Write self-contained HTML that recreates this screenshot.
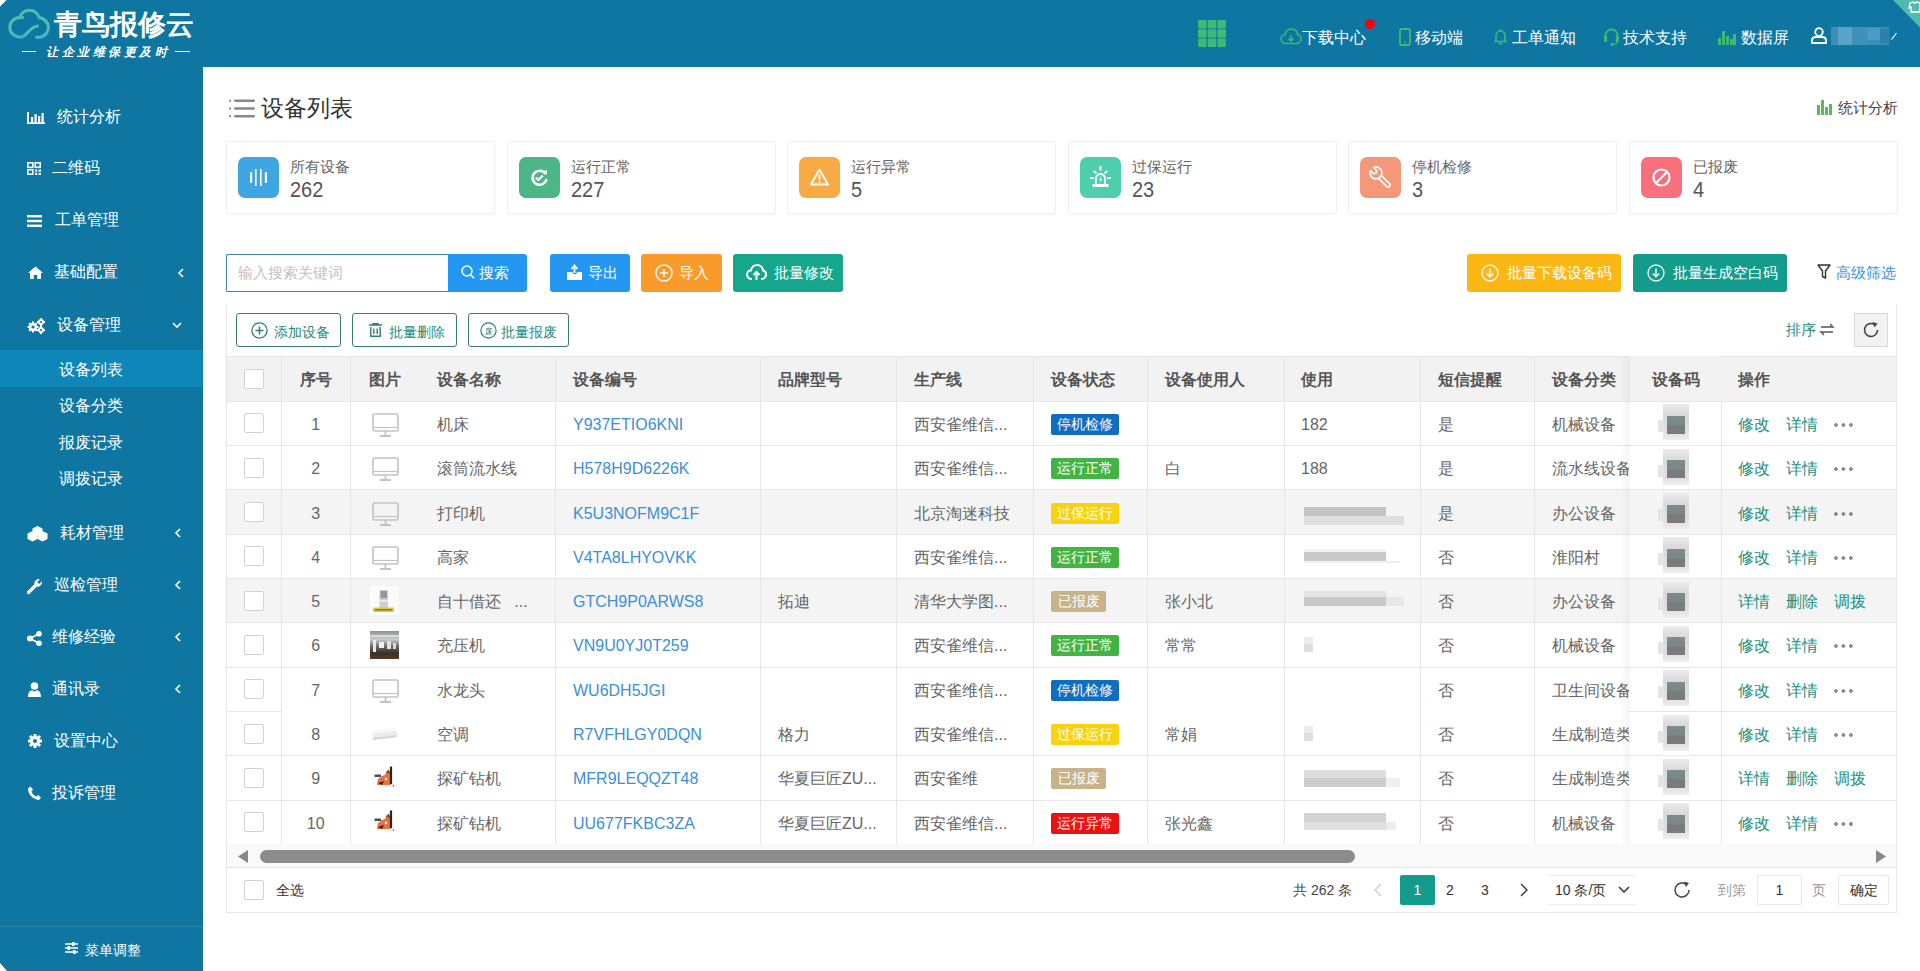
<!DOCTYPE html>
<html><head><meta charset="utf-8">
<style>
*{box-sizing:border-box;margin:0;padding:0}
html,body{width:1920px;height:971px;overflow:hidden;background:#fff;font-family:"Liberation Sans",sans-serif;color:#555}
.a{position:absolute;white-space:nowrap}
svg{position:absolute;overflow:visible}
#hdr{position:absolute;left:0;top:0;width:1920px;height:67px;background:#0e76a0}
#side{position:absolute;left:0;top:67px;width:203px;height:904px;background:#0e76a0}
.mt{position:absolute;color:#fff;font-size:16px;line-height:20px;white-space:nowrap}
.ht{position:absolute;top:28px;color:#fff;font-size:16px;line-height:20px;white-space:nowrap}
.card{position:absolute;top:141px;width:269px;height:73px;border:1px solid #f0f0f0;border-radius:3px;background:#fff;box-shadow:0 1px 2px rgba(0,0,0,.03)}
.card .sq{position:absolute;left:11px;top:15px;width:41px;height:41px;border-radius:7px}
.card .lb{position:absolute;left:63px;top:16px;font-size:15px;line-height:18px;color:#666;white-space:nowrap}
.card .nm{position:absolute;left:63px;top:36px;font-size:20px;line-height:24px;color:#555;transform:scaleY(1.1);transform-origin:0 20px}
.th{font-size:16px;line-height:20px;font-weight:bold;color:#555}
.td{font-size:16px;line-height:20px;color:#666}
.lnk{color:#3b8fd9}
.op{color:#1e9080}
.tag{height:21px;border-radius:2px;color:#fff;font-size:14px;line-height:21px;text-align:center}
.bt{font-size:15px;line-height:20px;color:#fff}
.ob{top:313px;height:34px;border:1px solid #3d7d74;border-radius:3px;background:#fff}
.obt{top:321.5px;font-size:14px;line-height:20px;color:#2b8a7c}
</style></head><body>
<div id="hdr">
  <!-- logo -->
  <svg style="left:8px;top:8px" width="42" height="32" viewBox="0 0 42 32"><defs><linearGradient id="cg" x1="0" y1="0" x2="0" y2="1"><stop offset="0" stop-color="#4fc0a8"/><stop offset="1" stop-color="#4ab5c8"/></linearGradient></defs><g fill="none" stroke="url(#cg)" stroke-width="2.7" transform="scale(1.16,1.12) translate(-2,-3)"><path d="M15.5 11.5 H12.5 A8.7 8.7 0 1 0 14.5 28.6"/><path d="M12 11.8 A8.6 8.6 0 0 1 28.8 11.8"/><path d="M28.5 11.8 A8.7 8.7 0 1 1 25.5 28.8"/><path d="M14.5 28.6 C19 27 21 19 28.5 19"/></g></svg>
  <div class="a" style="left:54px;top:7px;font-size:28px;line-height:36px;color:#fff;font-weight:bold;letter-spacing:0px">青鸟报修云</div><svg style="left:0;top:0" width="7" height="7" viewBox="0 0 7 7"><path d="M0 0 H6.5 L0 6.5 Z" fill="#fff"/></svg>
  <div class="a" style="left:22px;top:51px;width:14px;height:1px;background:#fff"></div>
  <div class="a" style="left:175px;top:51px;width:15px;height:1px;background:#fff"></div>
  <div class="a" style="left:46px;top:44px;font-size:12px;line-height:16px;color:#fff;letter-spacing:3.5px;font-family:'Liberation Serif',serif;font-style:italic;font-weight:bold">让企业维保更及时</div>
  <!-- grid -->
  <svg style="left:1198px;top:20px" width="28" height="27" viewBox="0 0 28 27"><g fill="#3fba74"><rect x="0" y="0" width="8.6" height="8.4" rx="1.5"/><rect x="9.7" y="0" width="8.6" height="8.4" rx="0.5"/><rect x="19.4" y="0" width="8.6" height="8.4" rx="1.5"/><rect x="0" y="9.3" width="8.6" height="8.4"/><rect x="9.7" y="9.3" width="8.6" height="8.4"/><rect x="19.4" y="9.3" width="8.6" height="8.4"/><rect x="0" y="18.6" width="8.6" height="8.4" rx="1.5"/><rect x="9.7" y="18.6" width="8.6" height="8.4"/><rect x="19.4" y="18.6" width="8.6" height="8.4" rx="1.5"/></g></svg>
  <!-- download -->
  <svg style="left:1280px;top:28px" width="22" height="17" viewBox="0 0 22 17"><path d="M6 15.5 C3 15.5 1 13.5 1 11 C1 8.5 3 7 5 7 C5.5 3.5 8 1 11.5 1 C15 1 17.5 3.5 17.5 6.5 C19.5 6.5 21 8.5 21 11 C21 13.5 19 15.5 16 15.5 Z" fill="none" stroke="#3fba74" stroke-width="1.5"/><path d="M11 7 V13 M8.5 10.5 L11 13 L13.5 10.5" fill="none" stroke="#3fba74" stroke-width="1.6"/></svg>
  <div class="ht" style="left:1302px">下载中心</div>
  <div class="a" style="left:1365.3px;top:19.3px;width:9.5px;height:9.5px;border-radius:50%;background:#f00"></div>
  <svg style="left:1399px;top:28px" width="12" height="18" viewBox="0 0 12 18"><rect x="1" y="1" width="10" height="16" rx="1.5" fill="none" stroke="#3fba74" stroke-width="1.8"/><circle cx="6" cy="14.5" r="0.9" fill="#3fba74"/></svg>
  <div class="ht" style="left:1415px">移动端</div>
  <svg style="left:1493px;top:28px" width="15" height="17" viewBox="0 0 15 17"><path d="M7.5 1 V2.5 M3 13 V8 C3 5 5 3 7.5 3 C10 3 12 5 12 8 V13 M1 13.5 H14 M6 15.5 H9" fill="none" stroke="#3fba74" stroke-width="1.6"/></svg>
  <div class="ht" style="left:1512px">工单通知</div>
  <svg style="left:1603px;top:27px" width="17" height="19" viewBox="0 0 17 19"><path d="M2.5 12 V8.5 A6 6 0 0 1 14.5 8.5 V12" fill="none" stroke="#3fba74" stroke-width="1.8"/><rect x="1" y="9" width="3.2" height="6" rx="1" fill="#3fba74"/><rect x="12.8" y="9" width="3.2" height="6" rx="1" fill="#3fba74"/><path d="M14.5 14 Q14 17.5 9.5 17.5" fill="none" stroke="#3fba74" stroke-width="1.4"/><circle cx="9" cy="17.5" r="1.4" fill="#3fba74"/></svg>
  <div class="ht" style="left:1623px">技术支持</div>
  <svg style="left:1718px;top:29px" width="18" height="16" viewBox="0 0 18 16"><g fill="#3fba74"><rect x="0" y="9" width="3" height="7"/><rect x="4" y="2" width="3" height="14"/><rect x="8" y="7" width="3" height="9"/><rect x="12" y="10" width="3" height="6"/><rect x="15" y="5" width="3" height="11"/></g></svg>
  <div class="ht" style="left:1741px">数据屏</div>
  <svg style="left:1811px;top:27px" width="16" height="17" viewBox="0 0 16 17"><circle cx="8" cy="5" r="3.8" fill="none" stroke="#fff" stroke-width="1.8"/><path d="M1 16 V13.5 C1 11 3 10 5 10 H11 C13 10 15 11 15 13.5 V16 Z" fill="none" stroke="#fff" stroke-width="1.8"/></svg>
  <div class="a" style="left:1831px;top:27px;width:58px;height:18px;background:#3a8db4"></div><div class="a" style="left:1838px;top:27px;width:14px;height:18px;background:#5aa3c6"></div><div class="a" style="left:1852px;top:27px;width:15px;height:18px;background:#3f91b8"></div><div class="a" style="left:1867px;top:28px;width:13px;height:12px;background:#4b9bc0"></div><div class="a" style="left:1880px;top:29px;width:10px;height:14px;background:#2a82ac"></div>
  <svg style="left:1891px;top:32px" width="6" height="8" viewBox="0 0 6 8"><path d="M0.5 7.5 L5.5 1" stroke="#fff" stroke-width="1.2"/></svg>
  <svg style="left:1880px;top:0" width="40" height="30" viewBox="0 0 40 30"><path d="M13 0 H40 V27.5 Z" fill="#55b9b3"/><path d="M30 3 L33 2 Q35 4 37 2 L40 3 V12 H31 V7 L29 8 Z" fill="none" stroke="#fff" stroke-width="1.3"/></svg>
</div>
<div id="side">
  <!-- y offsets relative to sidebar top (67) -->
  <svg style="left:27px;top:45px" width="18" height="12" viewBox="0 0 18 12"><g fill="#fff"><rect x="0" y="0" width="2" height="12"/><rect x="0" y="10.3" width="18" height="1.7"/><rect x="4" y="5" width="2.2" height="6"/><rect x="7.5" y="2" width="2.2" height="9"/><rect x="11" y="4" width="2.2" height="7"/><rect x="14.5" y="1" width="2.2" height="10"/></g></svg>
  <div class="mt" style="left:57px;top:40px">统计分析</div>
  <svg style="left:27px;top:95px" width="14" height="13" viewBox="0 0 14 13"><g fill="none" stroke="#fff" stroke-width="1.6"><rect x="0.8" y="0.8" width="5" height="4.5"/><rect x="8.2" y="0.8" width="5" height="4.5"/><rect x="0.8" y="7.7" width="5" height="4.5"/></g><g fill="#fff"><rect x="8" y="7.5" width="2.2" height="2.2"/><rect x="11.5" y="7.5" width="2.5" height="2.2"/><rect x="8" y="10.8" width="2.2" height="2.2"/><rect x="11.5" y="10.8" width="2.5" height="2.2"/></g></svg>
  <div class="mt" style="left:52px;top:91px">二维码</div>
  <svg style="left:27px;top:148px" width="15" height="12" viewBox="0 0 15 12"><g fill="#fff"><rect x="0" y="0" width="15" height="2.4"/><rect x="0" y="4.8" width="15" height="2.4"/><rect x="0" y="9.6" width="15" height="2.4"/></g></svg>
  <div class="mt" style="left:55px;top:143px">工单管理</div>
  <svg style="left:28px;top:199px" width="15" height="13" viewBox="0 0 15 13"><path d="M7.5 0.5 L15 7 L13 7 L13 13 L9.3 13 L9.3 9 L5.7 9 L5.7 13 L2 13 L2 7 L0 7 Z" fill="#fff"/></svg>
  <div class="mt" style="left:54px;top:195px">基础配置</div>
  <svg style="left:178px;top:201px" width="6" height="10" viewBox="0 0 6 10"><path d="M5 1 L1 5 L5 9" fill="none" stroke="#fff" stroke-width="1.6"/></svg>
  <svg style="left:27px;top:251px" width="18" height="15" viewBox="0 0 18 15"><g fill="#fff"><circle cx="6" cy="9" r="4.2"/><circle cx="14" cy="4" r="3"/><circle cx="14" cy="12" r="3"/></g><g fill="#0e76a0"><circle cx="6" cy="9" r="1.6"/><circle cx="14" cy="4" r="1.1"/><circle cx="14" cy="12" r="1.1"/></g><g stroke="#fff" stroke-width="2"><path d="M6 3.5 V14.5 M0.5 9 H11.5 M2.1 5.1 L9.9 12.9 M2.1 12.9 L9.9 5.1"/><path d="M14 0 V8 M10 4 H18 M14 8 V16 M10 12 H18"/></g><g fill="#0e76a0"><circle cx="6" cy="9" r="1.6"/><circle cx="14" cy="4" r="1.1"/><circle cx="14" cy="12" r="1.1"/></g></svg>
  <div class="mt" style="left:57px;top:248px">设备管理</div>
  <svg style="left:172px;top:255px" width="10" height="6" viewBox="0 0 10 6"><path d="M1 1 L5 5 L9 1" fill="none" stroke="#fff" stroke-width="1.6"/></svg>
  <div class="a" style="left:0;top:283px;width:203px;height:37px;background:#0e86b7"></div>
  <div class="mt" style="left:59px;top:293px">设备列表</div>
  <div class="mt" style="left:59px;top:329px">设备分类</div>
  <div class="mt" style="left:59px;top:365.5px">报废记录</div>
  <div class="mt" style="left:59px;top:401.5px">调拨记录</div>
  <svg style="left:27px;top:459px" width="21" height="15" viewBox="0 0 21 15"><g fill="#fff"><path d="M10.5 0 L15.5 2.5 V8 L10.5 10.5 L5.5 8 V2.5 Z"/><path d="M5.5 5 L10.5 7.5 V13 L5.5 15.5 L0.5 13 V7.5 Z"/><path d="M15.5 5 L20.5 7.5 V13 L15.5 15.5 L10.5 13 V7.5 Z"/></g></svg>
  <div class="mt" style="left:60px;top:456px">耗材管理</div>
  <svg style="left:175px;top:461px" width="6" height="10" viewBox="0 0 6 10"><path d="M5 1 L1 5 L5 9" fill="none" stroke="#fff" stroke-width="1.6"/></svg>
  <svg style="left:27px;top:511px" width="16" height="16" viewBox="0 0 16 16"><path d="M1.5 14.5 L8.5 7.5" stroke="#fff" stroke-width="3.2" stroke-linecap="round"/><path d="M8 8 C6.5 5 8 1.5 11.5 1 L13 1.2 L10.5 3.8 L11.2 5.2 L12.6 5.8 L15 3.2 C15.3 7 12 9.5 8.8 8.6 Z" fill="#fff"/></svg>
  <div class="mt" style="left:54px;top:508px">巡检管理</div>
  <svg style="left:175px;top:513px" width="6" height="10" viewBox="0 0 6 10"><path d="M5 1 L1 5 L5 9" fill="none" stroke="#fff" stroke-width="1.6"/></svg>
  <svg style="left:27px;top:564px" width="15" height="15" viewBox="0 0 15 15"><g fill="#fff"><circle cx="3" cy="7.5" r="3"/><circle cx="12" cy="2.8" r="2.8"/><circle cx="12" cy="12.2" r="2.8"/></g><path d="M3 7.5 L12 2.8 M3 7.5 L12 12.2" stroke="#fff" stroke-width="1.8"/></svg>
  <div class="mt" style="left:52px;top:560px">维修经验</div>
  <svg style="left:175px;top:565px" width="6" height="10" viewBox="0 0 6 10"><path d="M5 1 L1 5 L5 9" fill="none" stroke="#fff" stroke-width="1.6"/></svg>
  <svg style="left:28px;top:615px" width="13" height="15" viewBox="0 0 13 15"><g fill="#fff"><circle cx="6.5" cy="4" r="3.8"/><path d="M0 15 C0 10.5 2 8.5 4 8.3 L6.5 9.5 L9 8.3 C11 8.5 13 10.5 13 15 Z"/></g></svg>
  <div class="mt" style="left:52px;top:612px">通讯录</div>
  <svg style="left:175px;top:617px" width="6" height="10" viewBox="0 0 6 10"><path d="M5 1 L1 5 L5 9" fill="none" stroke="#fff" stroke-width="1.6"/></svg>
  <svg style="left:28px;top:667px" width="14" height="14" viewBox="0 0 14 14"><g fill="#fff"><circle cx="7" cy="7" r="5"/><path d="M7 0 V14 M0 7 H14 M2 2 L12 12 M2 12 L12 2" stroke="#fff" stroke-width="3"/></g><circle cx="7" cy="7" r="2" fill="#0e76a0"/></svg>
  <div class="mt" style="left:54px;top:664px">设置中心</div>
  <svg style="left:28px;top:719px" width="13" height="14" viewBox="0 0 13 14"><path d="M2.5 0.5 L5 3.5 L3.5 5.5 C4.5 8 6 9.5 8.5 10.5 L10 9 L13 11.5 L11 14 C5 13.5 0 8.5 0 2.5 Z" fill="#fff"/></svg>
  <div class="mt" style="left:52px;top:716px">投诉管理</div>
  <div class="a" style="left:0;top:859px;width:203px;height:1px;background:#2a86ad"></div>
  <svg style="left:65px;top:875px" width="13" height="12" viewBox="0 0 13 12"><g stroke="#fff" stroke-width="1.6"><path d="M0 2 H13 M0 6 H13 M0 10 H13"/></g><g fill="#fff"><rect x="7" y="0" width="2.5" height="4"/><rect x="2.5" y="4" width="2.5" height="4"/><rect x="8" y="8" width="2.5" height="4"/></g></svg>
  <div class="mt" style="left:85px;top:873px;font-size:14px">菜单调整</div>
  <svg style="left:0;top:896px" width="7" height="8" viewBox="0 0 7 8"><path d="M0 0 L7 8 H0 Z" fill="#fff"/></svg>
</div>

<!-- title -->
<svg style="left:229px;top:99px" width="26" height="19" viewBox="0 0 26 19"><g fill="#888"><rect x="0" y="0.8" width="2" height="2"/><rect x="0" y="8.5" width="2" height="2"/><rect x="0" y="16.2" width="2" height="2"/><rect x="5" y="0.5" width="21" height="2.4" rx="1.2"/><rect x="5" y="8.3" width="21" height="2.4" rx="1.2"/><rect x="5" y="16" width="21" height="2.4" rx="1.2"/></g></svg>
<div class="a" style="left:261px;top:95.5px;font-size:22.5px;line-height:26px;color:#333">设备列表</div>
<svg style="left:1817px;top:100px" width="16" height="15" viewBox="0 0 16 15"><g fill="#5cb85c"><rect x="0" y="5" width="3" height="10"/><rect x="4" y="0" width="3" height="15"/><rect x="8" y="7" width="3" height="8"/><rect x="12" y="4" width="3" height="11"/></g></svg>
<div class="a" style="left:1838px;top:98px;font-size:15px;line-height:20px;color:#444">统计分析</div>
<!-- cards -->
<div class="card" style="left:226px"><div class="sq" style="background:#3ea6e3"><svg style="left:12px;top:12px" width="17" height="17" viewBox="0 0 17 17"><g fill="#fff"><rect x="0" y="3" width="2.2" height="11" rx="1"/><rect x="5" y="0" width="1.6" height="17"/><rect x="10" y="0" width="1.6" height="17"/><rect x="14.8" y="3" width="2.2" height="11" rx="1"/></g></svg></div><div class="lb">所有设备</div><div class="nm">262</div></div>
<div class="card" style="left:507px"><div class="sq" style="background:#4db686"><svg style="left:11px;top:11px" width="19" height="19" viewBox="0 0 19 19"><path d="M15.5 6 A7 7 0 1 0 16.5 11" fill="none" stroke="#fff" stroke-width="2.4"/><path d="M12.5 3.5 L17 2 L16.5 7 Z" fill="#fff"/><path d="M5.8 9.5 L8.3 12 L12.8 7.6" fill="none" stroke="#fff" stroke-width="2.2"/></svg></div><div class="lb">运行正常</div><div class="nm">227</div></div>
<div class="card" style="left:787px"><div class="sq" style="background:#f8aa45"><svg style="left:11px;top:11px" width="19" height="18" viewBox="0 0 19 18"><path d="M9.5 1.5 L18 16.5 H1 Z" fill="none" stroke="#fff" stroke-width="1.8" stroke-linejoin="round"/><rect x="8.6" y="6.5" width="1.8" height="5.5" fill="#fff"/><rect x="8.6" y="13" width="1.8" height="1.8" fill="#fff"/></svg></div><div class="lb">运行异常</div><div class="nm">5</div></div>
<div class="card" style="left:1068px"><div class="sq" style="background:#4dcfae"><svg style="left:0;top:0" width="41" height="41" viewBox="0 0 41 41"><g stroke="#fff" stroke-width="1.8" fill="none"><path d="M20.5 9 V13.5 M13.8 13.8 L16.5 16.5 M27.2 13.8 L24.5 16.5 M10 21 H13.8 M27.2 21 H31"/><path d="M16 27.5 V21.5 A4.5 4.5 0 0 1 25 21.5 V27.5"/></g><rect x="12.5" y="27" width="16" height="3" fill="#fff"/><path d="M21.5 18.5 L18.8 23 H20.8 L19.5 26.5 L22.5 22 H20.5 Z" fill="#fff"/></svg></div><div class="lb">过保运行</div><div class="nm">23</div></div>
<div class="card" style="left:1348px"><div class="sq" style="background:#f5987a"><svg style="left:0;top:0" width="41" height="41" viewBox="0 0 41 41"><g transform="rotate(-45 20.5 20.5)" fill="none" stroke="#fff" stroke-width="1.7" stroke-linejoin="round"><path d="M18.3 8.5 A6 6 0 1 0 22.7 8.5 V13 L20.5 14.3 L18.3 13 Z"/><path d="M18.5 18.6 V31.5 Q18.5 33 20.5 33 Q22.5 33 22.5 31.5 V18.6"/></g></svg></div><div class="lb">停机检修</div><div class="nm">3</div></div>
<div class="card" style="left:1629px"><div class="sq" style="background:#f7707c"><svg style="left:11px;top:11px" width="19" height="19" viewBox="0 0 19 19"><circle cx="9.5" cy="9.5" r="8" fill="none" stroke="#fff" stroke-width="2.2"/><path d="M4 15 L15 4" stroke="#fff" stroke-width="2.2"/></svg></div><div class="lb">已报废</div><div class="nm">4</div></div>
<!-- toolbar row 1 -->
<div class="a" style="left:226px;top:254px;width:223px;height:38px;border:1px solid #3f83a6;border-right:none;border-radius:2px 0 0 2px;background:#fff"></div>
<div class="a" style="left:238px;top:263px;font-size:15px;line-height:20px;color:#c2c2c2">输入搜索关键词</div>
<div class="a btn" style="left:448px;top:254px;width:79px;height:38px;background:#2397f2;border-radius:0 3px 3px 0"></div>
<svg style="left:461px;top:265px" width="14" height="15" viewBox="0 0 14 15"><circle cx="6" cy="6" r="5" fill="none" stroke="#fff" stroke-width="1.5"/><path d="M9.8 9.8 L13 13.5" stroke="#fff" stroke-width="1.6"/></svg>
<div class="a bt" style="left:479px;top:263px">搜索</div>
<div class="a" style="left:550px;top:254px;width:80px;height:38px;background:#2397f2;border-radius:3px"></div>
<svg style="left:566px;top:264px" width="17" height="17" viewBox="0 0 17 17"><path d="M1 8 H6 L7.5 10 H10 L11.5 8 H16 V16 H1 Z" fill="#fff"/><path d="M8.5 9 V2 M5.5 5 L8.5 1.5 L11.5 5" fill="none" stroke="#fff" stroke-width="1.8"/></svg>
<div class="a bt" style="left:588px;top:263px">导出</div>
<div class="a" style="left:641px;top:254px;width:81px;height:38px;background:#f89b2a;border-radius:3px"></div>
<svg style="left:655px;top:264px" width="18" height="18" viewBox="0 0 18 18"><circle cx="9" cy="9" r="8" fill="none" stroke="#fff" stroke-width="1.4"/><path d="M9 5 V13 M5 9 H13" stroke="#fff" stroke-width="1.5"/></svg>
<div class="a bt" style="left:679px;top:263px">导入</div>
<div class="a" style="left:733px;top:254px;width:110px;height:38px;background:#16a68b;border-radius:3px"></div>
<svg style="left:746px;top:264px" width="21" height="17" viewBox="0 0 21 17"><path d="M6 15 C3 15 1 13 1 10.5 C1 8 3 6.5 5 6.5 C5.5 3.3 8 1 11 1 C14.5 1 17 3.5 17 6.5 C19 6.8 20 8.5 20 10.5 C20 13 18 15 15 15" fill="none" stroke="#fff" stroke-width="2"/><path d="M10.5 16 V8 M7.5 11 L10.5 8 L13.5 11" fill="none" stroke="#fff" stroke-width="2"/></svg>
<div class="a bt" style="left:774px;top:263px">批量修改</div>

<div class="a" style="left:1467px;top:254px;width:154px;height:38px;background:#fbb814;border-radius:3px"></div>
<svg style="left:1481px;top:264px" width="18" height="18" viewBox="0 0 18 18"><circle cx="9" cy="9" r="8" fill="none" stroke="#fff" stroke-width="1.3"/><path d="M9 4.5 V12.5 M5.8 9.5 L9 12.7 L12.2 9.5" fill="none" stroke="#fff" stroke-width="1.4"/></svg>
<div class="a bt" style="left:1507px;top:263px">批量下载设备码</div>
<div class="a" style="left:1633px;top:254px;width:154px;height:38px;background:#139b8b;border-radius:3px"></div>
<svg style="left:1647px;top:264px" width="18" height="18" viewBox="0 0 18 18"><circle cx="9" cy="9" r="8" fill="none" stroke="#fff" stroke-width="1.3"/><path d="M9 4.5 V12.5 M5.8 9.5 L9 12.7 L12.2 9.5" fill="none" stroke="#fff" stroke-width="1.4"/></svg>
<div class="a bt" style="left:1673px;top:263px">批量生成空白码</div>
<svg style="left:1817px;top:264px" width="14" height="15" viewBox="0 0 14 15"><path d="M1 1 H13 L8.5 7 V14 L5.5 12.5 V7 Z" fill="none" stroke="#333" stroke-width="1.4" stroke-linejoin="round"/></svg>
<div class="a" style="left:1836px;top:263px;font-size:15px;line-height:20px;color:#3c8fe0">高级筛选</div>

<!-- toolbar row 2 -->
<div class="a ob" style="left:236px;width:105px"></div>
<svg style="left:251px;top:322px" width="17" height="17" viewBox="0 0 17 17"><circle cx="8.5" cy="8.5" r="7.6" fill="none" stroke="#2d7f72" stroke-width="1.3"/><path d="M8.5 4.5 V12.5 M4.5 8.5 H12.5" stroke="#2d7f72" stroke-width="1.5"/></svg>
<div class="a obt" style="left:274px">添加设备</div>
<div class="a ob" style="left:352px;width:105px"></div>
<svg style="left:369px;top:323px" width="13" height="14" viewBox="0 0 13 14"><path d="M0 2 H13 M4 2 V0.8 H9 V2" fill="none" stroke="#2d7f72" stroke-width="1.4"/><path d="M1.8 4 V13.2 H11.2 V4 M4.8 5.5 V11 M8.2 5.5 V11" fill="none" stroke="#2d7f72" stroke-width="1.4"/></svg>
<div class="a obt" style="left:389px">批量删除</div>
<div class="a ob" style="left:468px;width:101px"></div>
<svg style="left:480px;top:322px" width="17" height="17" viewBox="0 0 17 17"><circle cx="8.5" cy="8.5" r="7.6" fill="none" stroke="#2d7f72" stroke-width="1.2"/><text x="8.5" y="12" font-size="8" text-anchor="middle" fill="#2d7f72">废</text></svg>
<div class="a obt" style="left:501px">批量报废</div>
<div class="a" style="left:1786px;top:320px;font-size:15px;line-height:20px;color:#2b8a7c">排序</div>
<svg style="left:1820px;top:323px" width="14" height="13" viewBox="0 0 14 13"><path d="M1 4 H13 L10 1 M13 9 H1 L4 12" fill="none" stroke="#555" stroke-width="1.4"/></svg>
<div class="a" style="left:1854px;top:313px;width:34px;height:34px;border:1px solid #d8d8d8;background:#f2f2f2"></div>
<svg style="left:1862px;top:321px" width="18" height="18" viewBox="0 0 18 18"><path d="M15.5 9 A6.5 6.5 0 1 1 12.5 3.5" fill="none" stroke="#444" stroke-width="1.6"/><path d="M10.5 1 L15.5 2.5 L12.5 6.5 Z" fill="#444"/></svg>

<div class="a" style="left:226px;top:304px;width:1671px;height:609px;border:1px solid #e6e6e6;border-top:none"></div>
<div class="a" style="left:227px;top:356.3px;width:1669px;height:45.0px;background:#f2f2f2"></div>
<div class="a" style="left:227px;top:489.9px;width:1669px;height:44.3px;background:#f4f4f4"></div>
<div class="a" style="left:227px;top:578.5px;width:1669px;height:44.3px;background:#f4f4f4"></div>
<div class="a" style="left:227px;top:356.3px;width:1669px;height:1px;background:#e6e6e6"></div>
<div class="a" style="left:227px;top:400.8px;width:1669px;height:1px;background:#e6e6e6"></div>
<div class="a" style="left:227px;top:445.1px;width:1669px;height:1px;background:#e6e6e6"></div>
<div class="a" style="left:227px;top:489.4px;width:1669px;height:1px;background:#e6e6e6"></div>
<div class="a" style="left:227px;top:533.7px;width:1669px;height:1px;background:#e6e6e6"></div>
<div class="a" style="left:227px;top:578.0px;width:1669px;height:1px;background:#e6e6e6"></div>
<div class="a" style="left:227px;top:622.3px;width:1669px;height:1px;background:#e6e6e6"></div>
<div class="a" style="left:227px;top:666.6px;width:1669px;height:1px;background:#e6e6e6"></div>
<div class="a" style="left:227px;top:710.9px;width:54px;height:1px;background:#e6e6e6"></div>
<div class="a" style="left:1629px;top:710.9px;width:267px;height:1px;background:#e6e6e6"></div>
<div class="a" style="left:227px;top:755.2px;width:1669px;height:1px;background:#e6e6e6"></div>
<div class="a" style="left:227px;top:799.5px;width:1669px;height:1px;background:#e6e6e6"></div>
<div class="a" style="left:227px;top:843.8px;width:1669px;height:1px;background:#e6e6e6"></div>
<div class="a" style="left:280.5px;top:356.3px;width:1px;height:488.0px;background:#e6e6e6"></div>
<div class="a" style="left:350.0px;top:356.3px;width:1px;height:488.0px;background:#e6e6e6"></div>
<div class="a" style="left:555.0px;top:356.3px;width:1px;height:488.0px;background:#e6e6e6"></div>
<div class="a" style="left:760.0px;top:356.3px;width:1px;height:488.0px;background:#e6e6e6"></div>
<div class="a" style="left:896.0px;top:356.3px;width:1px;height:488.0px;background:#e6e6e6"></div>
<div class="a" style="left:1033.0px;top:356.3px;width:1px;height:488.0px;background:#e6e6e6"></div>
<div class="a" style="left:1147.0px;top:356.3px;width:1px;height:488.0px;background:#e6e6e6"></div>
<div class="a" style="left:1284.0px;top:356.3px;width:1px;height:488.0px;background:#e6e6e6"></div>
<div class="a" style="left:1420.0px;top:356.3px;width:1px;height:488.0px;background:#e6e6e6"></div>
<div class="a" style="left:1534.0px;top:356.3px;width:1px;height:488.0px;background:#e6e6e6"></div>
<div class="a" style="left:1720.8px;top:356.3px;width:1px;height:488.0px;background:#e6e6e6"></div>
<div class="a" style="left:1619.5px;top:356.3px;width:10px;height:488.0px;background:linear-gradient(90deg,rgba(0,0,0,0),rgba(0,0,0,.035))"></div>
<div class="a" style="left:1629.5px;top:356.3px;width:92px;height:45.0px;background:#f2f2f2"></div>
<div class="a" style="left:244px;top:368.8px;width:20px;height:20px;border:1px solid #d2d2d2;border-radius:2px;background:#fff"></div>
<div class="a th" style="left:281px;width:69.5px;text-align:center;top:369.8px;">序号</div>
<div class="a th" style="left:369px;top:369.8px;">图片</div>
<div class="a th" style="left:437px;top:369.8px;">设备名称</div>
<div class="a th" style="left:573px;top:369.8px;">设备编号</div>
<div class="a th" style="left:778px;top:369.8px;">品牌型号</div>
<div class="a th" style="left:914px;top:369.8px;">生产线</div>
<div class="a th" style="left:1051px;top:369.8px;">设备状态</div>
<div class="a th" style="left:1165px;top:369.8px;">设备使用人</div>
<div class="a th" style="left:1301px;top:369.8px;">使用</div>
<div class="a th" style="left:1438px;top:369.8px;">短信提醒</div>
<div class="a th" style="left:1552px;top:369.8px;">设备分类</div>
<div class="a th" style="left:1652px;top:369.8px;">设备码</div>
<div class="a th" style="left:1738px;top:369.8px;">操作</div>
<div class="a" style="left:244px;top:413.4px;width:20px;height:20px;border:1px solid #d2d2d2;border-radius:2px;background:#fff"></div>
<div class="a td" style="left:281px;width:69.5px;text-align:center;top:414.9px;">1</div>
<svg style="left:371.5px;top:412.9px" width="27" height="25" viewBox="0 0 27 25"><rect x="1" y="1" width="25" height="17" rx="1.5" fill="none" stroke="#c3c3c3" stroke-width="1.6"/><path d="M1.5 14.5 H25.5" stroke="#c3c3c3" stroke-width="1.2"/><path d="M13.5 18 V22 M8 23 H19" stroke="#c3c3c3" stroke-width="1.8"/></svg>
<div class="a td" style="left:437px;top:414.9px;">机床</div>
<div class="a td lnk" style="left:573px;top:414.9px;">Y937ETIO6KNI</div>
<div class="a td" style="left:914px;top:414.9px;">西安雀维信...</div>
<div class="a tag" style="left:1051px;top:413.9px;width:68px;background:#0f6ebf">停机检修</div>
<div class="a td" style="left:1301px;top:414.9px;">182</div>
<div class="a td" style="left:1438px;top:414.9px;">是</div>
<div class="a td" style="left:1552px;top:414.9px;width:77px;overflow:hidden">机械设备</div>
<div class="a" style="left:1663px;top:404.4px;width:26px;height:36px;background:linear-gradient(180deg,#ececec,#d9d9d9 30%,#e0e0e0 80%,#efefef)"></div>
<div class="a" style="left:1658px;top:420.4px;width:6px;height:12px;background:#e4e4e4"></div>
<div class="a" style="left:1667px;top:415.9px;width:18px;height:18px;background:linear-gradient(180deg,#7e8c8a,#788887 50%,#7a7a7a 55%,#7c7c7c)"></div>
<div class="a td op" style="left:1738px;top:414.9px;">修改</div>
<div class="a td op" style="left:1786px;top:414.9px;">详情</div>
<div class="a" style="left:1834px;top:422.9px;width:20px;height:4px;background:radial-gradient(circle at 2px 2px,#8a8a8a 1.6px,transparent 2px) 0 0/7.5px 4px repeat-x"></div>
<div class="a" style="left:244px;top:457.8px;width:20px;height:20px;border:1px solid #d2d2d2;border-radius:2px;background:#fff"></div>
<div class="a td" style="left:281px;width:69.5px;text-align:center;top:459.2px;">2</div>
<svg style="left:371.5px;top:457.2px" width="27" height="25" viewBox="0 0 27 25"><rect x="1" y="1" width="25" height="17" rx="1.5" fill="none" stroke="#c3c3c3" stroke-width="1.6"/><path d="M1.5 14.5 H25.5" stroke="#c3c3c3" stroke-width="1.2"/><path d="M13.5 18 V22 M8 23 H19" stroke="#c3c3c3" stroke-width="1.8"/></svg>
<div class="a td" style="left:437px;top:459.2px;">滚筒流水线</div>
<div class="a td lnk" style="left:573px;top:459.2px;">H578H9D6226K</div>
<div class="a td" style="left:914px;top:459.2px;">西安雀维信...</div>
<div class="a tag" style="left:1051px;top:458.2px;width:68px;background:#43b443">运行正常</div>
<div class="a td" style="left:1165px;top:459.2px;">白</div>
<div class="a td" style="left:1301px;top:459.2px;">188</div>
<div class="a td" style="left:1438px;top:459.2px;">是</div>
<div class="a td" style="left:1552px;top:459.2px;width:77px;overflow:hidden">流水线设备</div>
<div class="a" style="left:1663px;top:448.8px;width:26px;height:36px;background:linear-gradient(180deg,#ececec,#d9d9d9 30%,#e0e0e0 80%,#efefef)"></div>
<div class="a" style="left:1658px;top:464.8px;width:6px;height:12px;background:#e4e4e4"></div>
<div class="a" style="left:1667px;top:460.2px;width:18px;height:18px;background:linear-gradient(180deg,#7e8c8a,#788887 50%,#7a7a7a 55%,#7c7c7c)"></div>
<div class="a td op" style="left:1738px;top:459.2px;">修改</div>
<div class="a td op" style="left:1786px;top:459.2px;">详情</div>
<div class="a" style="left:1834px;top:467.2px;width:20px;height:4px;background:radial-gradient(circle at 2px 2px,#8a8a8a 1.6px,transparent 2px) 0 0/7.5px 4px repeat-x"></div>
<div class="a" style="left:244px;top:502.0px;width:20px;height:20px;border:1px solid #d2d2d2;border-radius:2px;background:#fff"></div>
<div class="a td" style="left:281px;width:69.5px;text-align:center;top:503.5px;">3</div>
<svg style="left:371.5px;top:501.5px" width="27" height="25" viewBox="0 0 27 25"><rect x="1" y="1" width="25" height="17" rx="1.5" fill="none" stroke="#c3c3c3" stroke-width="1.6"/><path d="M1.5 14.5 H25.5" stroke="#c3c3c3" stroke-width="1.2"/><path d="M13.5 18 V22 M8 23 H19" stroke="#c3c3c3" stroke-width="1.8"/></svg>
<div class="a td" style="left:437px;top:503.5px;">打印机</div>
<div class="a td lnk" style="left:573px;top:503.5px;">K5U3NOFM9C1F</div>
<div class="a td" style="left:914px;top:503.5px;">北京淘迷科技</div>
<div class="a tag" style="left:1051px;top:502.5px;width:68px;background:#f9d20f">过保运行</div>
<div class="a" style="left:1304px;top:506.7px;width:82px;height:9.3px;background:#c3c3c3"></div>
<div class="a" style="left:1304px;top:516.0px;width:100px;height:8.6px;background:#dedede"></div>
<div class="a td" style="left:1438px;top:503.5px;">是</div>
<div class="a td" style="left:1552px;top:503.5px;width:77px;overflow:hidden">办公设备</div>
<div class="a" style="left:1663px;top:493.0px;width:26px;height:36px;background:linear-gradient(180deg,#ececec,#d9d9d9 30%,#e0e0e0 80%,#efefef)"></div>
<div class="a" style="left:1658px;top:509.0px;width:6px;height:12px;background:#e4e4e4"></div>
<div class="a" style="left:1667px;top:504.5px;width:18px;height:18px;background:linear-gradient(180deg,#7e8c8a,#788887 50%,#7a7a7a 55%,#7c7c7c)"></div>
<div class="a td op" style="left:1738px;top:503.5px;">修改</div>
<div class="a td op" style="left:1786px;top:503.5px;">详情</div>
<div class="a" style="left:1834px;top:511.5px;width:20px;height:4px;background:radial-gradient(circle at 2px 2px,#8a8a8a 1.6px,transparent 2px) 0 0/7.5px 4px repeat-x"></div>
<div class="a" style="left:244px;top:546.4px;width:20px;height:20px;border:1px solid #d2d2d2;border-radius:2px;background:#fff"></div>
<div class="a td" style="left:281px;width:69.5px;text-align:center;top:547.9px;">4</div>
<svg style="left:371.5px;top:545.9px" width="27" height="25" viewBox="0 0 27 25"><rect x="1" y="1" width="25" height="17" rx="1.5" fill="none" stroke="#c3c3c3" stroke-width="1.6"/><path d="M1.5 14.5 H25.5" stroke="#c3c3c3" stroke-width="1.2"/><path d="M13.5 18 V22 M8 23 H19" stroke="#c3c3c3" stroke-width="1.8"/></svg>
<div class="a td" style="left:437px;top:547.9px;">高家</div>
<div class="a td lnk" style="left:573px;top:547.9px;">V4TA8LHYOVKK</div>
<div class="a td" style="left:914px;top:547.9px;">西安雀维信...</div>
<div class="a tag" style="left:1051px;top:546.9px;width:68px;background:#43b443">运行正常</div>
<div class="a" style="left:1304px;top:551.9px;width:82px;height:8.7px;background:#c9c9c9"></div>
<div class="a" style="left:1304px;top:549.4px;width:82px;height:2.5px;background:#f3f3f3"></div>
<div class="a" style="left:1304px;top:560.6px;width:96px;height:2.5px;background:#f0f0f0"></div>
<div class="a td" style="left:1438px;top:547.9px;">否</div>
<div class="a td" style="left:1552px;top:547.9px;width:77px;overflow:hidden">淮阳村</div>
<div class="a" style="left:1663px;top:537.4px;width:26px;height:36px;background:linear-gradient(180deg,#ececec,#d9d9d9 30%,#e0e0e0 80%,#efefef)"></div>
<div class="a" style="left:1658px;top:553.4px;width:6px;height:12px;background:#e4e4e4"></div>
<div class="a" style="left:1667px;top:548.9px;width:18px;height:18px;background:linear-gradient(180deg,#7e8c8a,#788887 50%,#7a7a7a 55%,#7c7c7c)"></div>
<div class="a td op" style="left:1738px;top:547.9px;">修改</div>
<div class="a td op" style="left:1786px;top:547.9px;">详情</div>
<div class="a" style="left:1834px;top:555.9px;width:20px;height:4px;background:radial-gradient(circle at 2px 2px,#8a8a8a 1.6px,transparent 2px) 0 0/7.5px 4px repeat-x"></div>
<div class="a" style="left:244px;top:590.6px;width:20px;height:20px;border:1px solid #d2d2d2;border-radius:2px;background:#fff"></div>
<div class="a td" style="left:281px;width:69.5px;text-align:center;top:592.1px;">5</div>
<svg style="left:370px;top:586.1px" width="29" height="29" viewBox="0 0 29 29"><rect width="29" height="29" fill="#fbfbfb"/><rect x="9.5" y="4" width="8.5" height="19" fill="#c9cfd3"/><rect x="10.5" y="5" width="6.5" height="7" fill="#8e9aa6"/><rect x="10" y="14" width="7.5" height="2" fill="#e8eaec"/><rect x="3" y="21.5" width="21" height="4.5" fill="#dcc84a"/><rect x="5" y="23" width="17" height="1.5" fill="#8a7a20"/></svg>
<div class="a td" style="left:437px;top:592.1px;">自十借还&nbsp;&nbsp;&nbsp;...</div>
<div class="a td lnk" style="left:573px;top:592.1px;">GTCH9P0ARWS8</div>
<div class="a td" style="left:778px;top:592.1px;">拓迪</div>
<div class="a td" style="left:914px;top:592.1px;">清华大学图...</div>
<div class="a tag" style="left:1051px;top:591.1px;width:55px;background:#c8b28a">已报废</div>
<div class="a td" style="left:1165px;top:592.1px;">张小北</div>
<div class="a" style="left:1304px;top:590.6px;width:82px;height:6.4px;background:#e3e3e3"></div>
<div class="a" style="left:1304px;top:597.0px;width:82px;height:8.6px;background:#c8c8c8"></div>
<div class="a" style="left:1386px;top:597.0px;width:18px;height:8.6px;background:#e8e8e8"></div>
<div class="a td" style="left:1438px;top:592.1px;">否</div>
<div class="a td" style="left:1552px;top:592.1px;width:77px;overflow:hidden">办公设备</div>
<div class="a" style="left:1663px;top:581.6px;width:26px;height:36px;background:linear-gradient(180deg,#ececec,#d9d9d9 30%,#e0e0e0 80%,#efefef)"></div>
<div class="a" style="left:1658px;top:597.6px;width:6px;height:12px;background:#e4e4e4"></div>
<div class="a" style="left:1667px;top:593.1px;width:18px;height:18px;background:linear-gradient(180deg,#7e8c8a,#788887 50%,#7a7a7a 55%,#7c7c7c)"></div>
<div class="a td op" style="left:1738px;top:592.1px;">详情</div>
<div class="a td op" style="left:1786px;top:592.1px;">删除</div>
<div class="a td op" style="left:1834px;top:592.1px;">调拨</div>
<div class="a" style="left:244px;top:634.9px;width:20px;height:20px;border:1px solid #d2d2d2;border-radius:2px;background:#fff"></div>
<div class="a td" style="left:281px;width:69.5px;text-align:center;top:636.4px;">6</div>
<svg style="left:370px;top:630.9px" width="29" height="28" viewBox="0 0 29 28"><defs><linearGradient id="g2" x1="0" y1="0" x2="0" y2="1"><stop offset="0" stop-color="#8d9296"/><stop offset=".3" stop-color="#c9cdd0"/><stop offset=".55" stop-color="#6d6862"/><stop offset=".8" stop-color="#3b2e28"/><stop offset="1" stop-color="#5a3a28"/></linearGradient></defs><rect width="29" height="28" fill="url(#g2)"/><rect x="3" y="9" width="3" height="12" fill="#e8e8e8"/><rect x="9" y="11" width="5" height="6" fill="#f2f2f2"/><rect x="17" y="10" width="4" height="8" fill="#e0e0e0"/><rect x="23" y="12" width="3" height="6" fill="#d8d8d8"/><rect x="0" y="4" width="29" height="2" fill="#d8dcde"/></svg>
<div class="a td" style="left:437px;top:636.4px;">充压机</div>
<div class="a td lnk" style="left:573px;top:636.4px;">VN9U0YJ0T259</div>
<div class="a td" style="left:914px;top:636.4px;">西安雀维信...</div>
<div class="a tag" style="left:1051px;top:635.4px;width:68px;background:#43b443">运行正常</div>
<div class="a td" style="left:1165px;top:636.4px;">常常</div>
<div class="a" style="left:1304px;top:636.9px;width:9px;height:15px;background:linear-gradient(180deg,#ececec 45%,#dedede 45%)"></div>
<div class="a td" style="left:1438px;top:636.4px;">否</div>
<div class="a td" style="left:1552px;top:636.4px;width:77px;overflow:hidden">机械设备</div>
<div class="a" style="left:1663px;top:625.9px;width:26px;height:36px;background:linear-gradient(180deg,#ececec,#d9d9d9 30%,#e0e0e0 80%,#efefef)"></div>
<div class="a" style="left:1658px;top:641.9px;width:6px;height:12px;background:#e4e4e4"></div>
<div class="a" style="left:1667px;top:637.4px;width:18px;height:18px;background:linear-gradient(180deg,#7e8c8a,#788887 50%,#7a7a7a 55%,#7c7c7c)"></div>
<div class="a td op" style="left:1738px;top:636.4px;">修改</div>
<div class="a td op" style="left:1786px;top:636.4px;">详情</div>
<div class="a" style="left:1834px;top:644.4px;width:20px;height:4px;background:radial-gradient(circle at 2px 2px,#8a8a8a 1.6px,transparent 2px) 0 0/7.5px 4px repeat-x"></div>
<div class="a" style="left:244px;top:679.2px;width:20px;height:20px;border:1px solid #d2d2d2;border-radius:2px;background:#fff"></div>
<div class="a td" style="left:281px;width:69.5px;text-align:center;top:680.7px;">7</div>
<svg style="left:371.5px;top:678.7px" width="27" height="25" viewBox="0 0 27 25"><rect x="1" y="1" width="25" height="17" rx="1.5" fill="none" stroke="#c3c3c3" stroke-width="1.6"/><path d="M1.5 14.5 H25.5" stroke="#c3c3c3" stroke-width="1.2"/><path d="M13.5 18 V22 M8 23 H19" stroke="#c3c3c3" stroke-width="1.8"/></svg>
<div class="a td" style="left:437px;top:680.7px;">水龙头</div>
<div class="a td lnk" style="left:573px;top:680.7px;">WU6DH5JGI</div>
<div class="a td" style="left:914px;top:680.7px;">西安雀维信...</div>
<div class="a tag" style="left:1051px;top:679.7px;width:68px;background:#0f6ebf">停机检修</div>
<div class="a td" style="left:1438px;top:680.7px;">否</div>
<div class="a td" style="left:1552px;top:680.7px;width:77px;overflow:hidden">卫生间设备</div>
<div class="a" style="left:1663px;top:670.2px;width:26px;height:36px;background:linear-gradient(180deg,#ececec,#d9d9d9 30%,#e0e0e0 80%,#efefef)"></div>
<div class="a" style="left:1658px;top:686.2px;width:6px;height:12px;background:#e4e4e4"></div>
<div class="a" style="left:1667px;top:681.7px;width:18px;height:18px;background:linear-gradient(180deg,#7e8c8a,#788887 50%,#7a7a7a 55%,#7c7c7c)"></div>
<div class="a td op" style="left:1738px;top:680.7px;">修改</div>
<div class="a td op" style="left:1786px;top:680.7px;">详情</div>
<div class="a" style="left:1834px;top:688.7px;width:20px;height:4px;background:radial-gradient(circle at 2px 2px,#8a8a8a 1.6px,transparent 2px) 0 0/7.5px 4px repeat-x"></div>
<div class="a" style="left:244px;top:723.5px;width:20px;height:20px;border:1px solid #d2d2d2;border-radius:2px;background:#fff"></div>
<div class="a td" style="left:281px;width:69.5px;text-align:center;top:725.0px;">8</div>
<svg style="left:371px;top:726.5px" width="27" height="14" viewBox="0 0 27 14"><path d="M1 4 L25 1 L26 10 L2 13 Z" fill="#ececec"/><path d="M1 4 L25 1 L25.3 4 L1.3 7 Z" fill="#f8f8f8"/><path d="M2 11 L26 8 L26 10 L2 13 Z" fill="#d6d6d6"/></svg>
<div class="a td" style="left:437px;top:725.0px;">空调</div>
<div class="a td lnk" style="left:573px;top:725.0px;">R7VFHLGY0DQN</div>
<div class="a td" style="left:778px;top:725.0px;">格力</div>
<div class="a td" style="left:914px;top:725.0px;">西安雀维信...</div>
<div class="a tag" style="left:1051px;top:724.0px;width:68px;background:#f9d20f">过保运行</div>
<div class="a td" style="left:1165px;top:725.0px;">常娟</div>
<div class="a" style="left:1304px;top:725.5px;width:9px;height:15px;background:linear-gradient(180deg,#ececec 45%,#dedede 45%)"></div>
<div class="a td" style="left:1438px;top:725.0px;">否</div>
<div class="a td" style="left:1552px;top:725.0px;width:77px;overflow:hidden">生成制造类</div>
<div class="a" style="left:1663px;top:714.5px;width:26px;height:36px;background:linear-gradient(180deg,#ececec,#d9d9d9 30%,#e0e0e0 80%,#efefef)"></div>
<div class="a" style="left:1658px;top:730.5px;width:6px;height:12px;background:#e4e4e4"></div>
<div class="a" style="left:1667px;top:726.0px;width:18px;height:18px;background:linear-gradient(180deg,#7e8c8a,#788887 50%,#7a7a7a 55%,#7c7c7c)"></div>
<div class="a td op" style="left:1738px;top:725.0px;">修改</div>
<div class="a td op" style="left:1786px;top:725.0px;">详情</div>
<div class="a" style="left:1834px;top:733.0px;width:20px;height:4px;background:radial-gradient(circle at 2px 2px,#8a8a8a 1.6px,transparent 2px) 0 0/7.5px 4px repeat-x"></div>
<div class="a" style="left:244px;top:767.9px;width:20px;height:20px;border:1px solid #d2d2d2;border-radius:2px;background:#fff"></div>
<div class="a td" style="left:281px;width:69.5px;text-align:center;top:769.4px;">9</div>
<svg style="left:374px;top:765.9px" width="21" height="21" viewBox="0 0 21 21"><path d="M3 19 L4 13 L8 10 L11 9 L12 6 L16 6 L17 19 Z" fill="#e8703a"/><path d="M17 0.5 V18" stroke="#2a2522" stroke-width="2.2"/><path d="M0.5 8.5 H7 V11 H0.5 Z" fill="#4a4f55"/><path d="M12 6 L15 3.5 L16 8 Z" fill="#7a3a20"/><path d="M4 17 L10 15 L8 19 Z" fill="#3a2018"/><circle cx="12" cy="13" r="1.3" fill="#fff"/><circle cx="19.5" cy="20" r="0.7" fill="#333"/></svg>
<div class="a td" style="left:437px;top:769.4px;">探矿钻机</div>
<div class="a td lnk" style="left:573px;top:769.4px;">MFR9LEQQZT48</div>
<div class="a td" style="left:778px;top:769.4px;">华夏巨匠ZU...</div>
<div class="a td" style="left:914px;top:769.4px;">西安雀维</div>
<div class="a tag" style="left:1051px;top:768.4px;width:55px;background:#c8b28a">已报废</div>
<div class="a" style="left:1304px;top:769.5px;width:82px;height:8.4px;background:#dcdcdc"></div>
<div class="a" style="left:1304px;top:777.9px;width:82px;height:8.7px;background:#cdcdcd"></div>
<div class="a" style="left:1386px;top:777.9px;width:14px;height:8.7px;background:#efefef"></div>
<div class="a td" style="left:1438px;top:769.4px;">否</div>
<div class="a td" style="left:1552px;top:769.4px;width:77px;overflow:hidden">生成制造类</div>
<div class="a" style="left:1663px;top:758.9px;width:26px;height:36px;background:linear-gradient(180deg,#ececec,#d9d9d9 30%,#e0e0e0 80%,#efefef)"></div>
<div class="a" style="left:1658px;top:774.9px;width:6px;height:12px;background:#e4e4e4"></div>
<div class="a" style="left:1667px;top:770.4px;width:18px;height:18px;background:linear-gradient(180deg,#7e8c8a,#788887 50%,#7a7a7a 55%,#7c7c7c)"></div>
<div class="a td op" style="left:1738px;top:769.4px;">详情</div>
<div class="a td op" style="left:1786px;top:769.4px;">删除</div>
<div class="a td op" style="left:1834px;top:769.4px;">调拨</div>
<div class="a" style="left:244px;top:812.1px;width:20px;height:20px;border:1px solid #d2d2d2;border-radius:2px;background:#fff"></div>
<div class="a td" style="left:281px;width:69.5px;text-align:center;top:813.6px;">10</div>
<svg style="left:374px;top:810.1px" width="21" height="21" viewBox="0 0 21 21"><path d="M3 19 L4 13 L8 10 L11 9 L12 6 L16 6 L17 19 Z" fill="#e8703a"/><path d="M17 0.5 V18" stroke="#2a2522" stroke-width="2.2"/><path d="M0.5 8.5 H7 V11 H0.5 Z" fill="#4a4f55"/><path d="M12 6 L15 3.5 L16 8 Z" fill="#7a3a20"/><path d="M4 17 L10 15 L8 19 Z" fill="#3a2018"/><circle cx="12" cy="13" r="1.3" fill="#fff"/><circle cx="19.5" cy="20" r="0.7" fill="#333"/></svg>
<div class="a td" style="left:437px;top:813.6px;">探矿钻机</div>
<div class="a td lnk" style="left:573px;top:813.6px;">UU677FKBC3ZA</div>
<div class="a td" style="left:778px;top:813.6px;">华夏巨匠ZU...</div>
<div class="a td" style="left:914px;top:813.6px;">西安雀维信...</div>
<div class="a tag" style="left:1051px;top:812.6px;width:68px;background:#ee1111">运行异常</div>
<div class="a td" style="left:1165px;top:813.6px;">张光鑫</div>
<div class="a" style="left:1304px;top:813.1px;width:82px;height:8.5px;background:#d2d2d2"></div>
<div class="a" style="left:1304px;top:821.6px;width:82px;height:8.9px;background:#e0e0e0"></div>
<div class="a" style="left:1386px;top:821.6px;width:10px;height:8.9px;background:#ececec"></div>
<div class="a td" style="left:1438px;top:813.6px;">否</div>
<div class="a td" style="left:1552px;top:813.6px;width:77px;overflow:hidden">机械设备</div>
<div class="a" style="left:1663px;top:803.1px;width:26px;height:36px;background:linear-gradient(180deg,#ececec,#d9d9d9 30%,#e0e0e0 80%,#efefef)"></div>
<div class="a" style="left:1658px;top:819.1px;width:6px;height:12px;background:#e4e4e4"></div>
<div class="a" style="left:1667px;top:814.6px;width:18px;height:18px;background:linear-gradient(180deg,#7e8c8a,#788887 50%,#7a7a7a 55%,#7c7c7c)"></div>
<div class="a td op" style="left:1738px;top:813.6px;">修改</div>
<div class="a td op" style="left:1786px;top:813.6px;">详情</div>
<div class="a" style="left:1834px;top:821.6px;width:20px;height:4px;background:radial-gradient(circle at 2px 2px,#8a8a8a 1.6px,transparent 2px) 0 0/7.5px 4px repeat-x"></div>
<div class="a" style="left:227px;top:844.3px;width:1669px;height:23.2px;background:#f9f9f9"></div>
<div class="a" style="left:227px;top:867px;width:1669px;height:1px;background:#e6e6e6"></div>
<svg style="left:238px;top:850px" width="10" height="13" viewBox="0 0 10 13"><path d="M10 0 L0 6.5 L10 13 Z" fill="#888"/></svg>
<svg style="left:1876px;top:850px" width="10" height="13" viewBox="0 0 10 13"><path d="M0 0 L10 6.5 L0 13 Z" fill="#888"/></svg>
<div class="a" style="left:260px;top:850px;width:1095px;height:13px;border-radius:6.5px;background:#8c8c8c"></div>
<div class="a" style="left:244px;top:880px;width:20px;height:20px;border:1px solid #d2d2d2;border-radius:2px;background:#fff"></div>
<div class="a" style="left:276px;top:880px;font-size:14px;line-height:20px;color:#333">全选</div>
<div class="a" style="left:1293px;top:880px;font-size:14px;line-height:20px;color:#444">共 262 条</div>
<svg style="left:1374px;top:883px" width="8" height="14" viewBox="0 0 8 14"><path d="M7 1 L1 7 L7 13" fill="none" stroke="#ccc" stroke-width="1.3"/></svg>
<div class="a" style="left:1400px;top:875px;width:35px;height:30px;border-radius:2px;background:#139b8b;color:#fff;font-size:14px;line-height:30px;text-align:center">1</div>
<div class="a" style="left:1446px;top:880px;font-size:14px;line-height:20px;color:#333">2</div>
<div class="a" style="left:1481px;top:880px;font-size:14px;line-height:20px;color:#333">3</div>
<svg style="left:1520px;top:883px" width="8" height="14" viewBox="0 0 8 14"><path d="M1 1 L7 7 L1 13" fill="none" stroke="#333" stroke-width="1.3"/></svg>
<div class="a" style="left:1547px;top:875px;width:89px;height:30px;border-top:1px solid #eee;border-bottom:1px solid #eee"></div>
<div class="a" style="left:1555px;top:880px;font-size:14px;line-height:20px;color:#333">10 条/页</div>
<svg style="left:1618px;top:886px" width="12" height="8" viewBox="0 0 12 8"><path d="M1 1 L6 6 L11 1" fill="none" stroke="#333" stroke-width="1.5"/></svg>
<svg style="left:1672px;top:880px" width="20" height="20" viewBox="0 0 20 20"><path d="M17 10 A7 7 0 1 1 14 4.3" fill="none" stroke="#444" stroke-width="1.5"/><path d="M12 1.5 L17 3 L14 7 Z" fill="#444"/></svg>
<div class="a" style="left:1718px;top:880px;font-size:14px;line-height:20px;color:#999">到第</div>
<div class="a" style="left:1757px;top:875px;width:45px;height:30px;border:1px solid #e6e6e6;border-radius:2px;font-size:14px;line-height:28px;text-align:center;color:#333">1</div>
<div class="a" style="left:1812px;top:880px;font-size:14px;line-height:20px;color:#999">页</div>
<div class="a" style="left:1838px;top:875px;width:51px;height:30px;border:1px solid #e6e6e6;border-radius:2px;font-size:14px;line-height:28px;text-align:center;color:#333">确定</div>

</body></html>
